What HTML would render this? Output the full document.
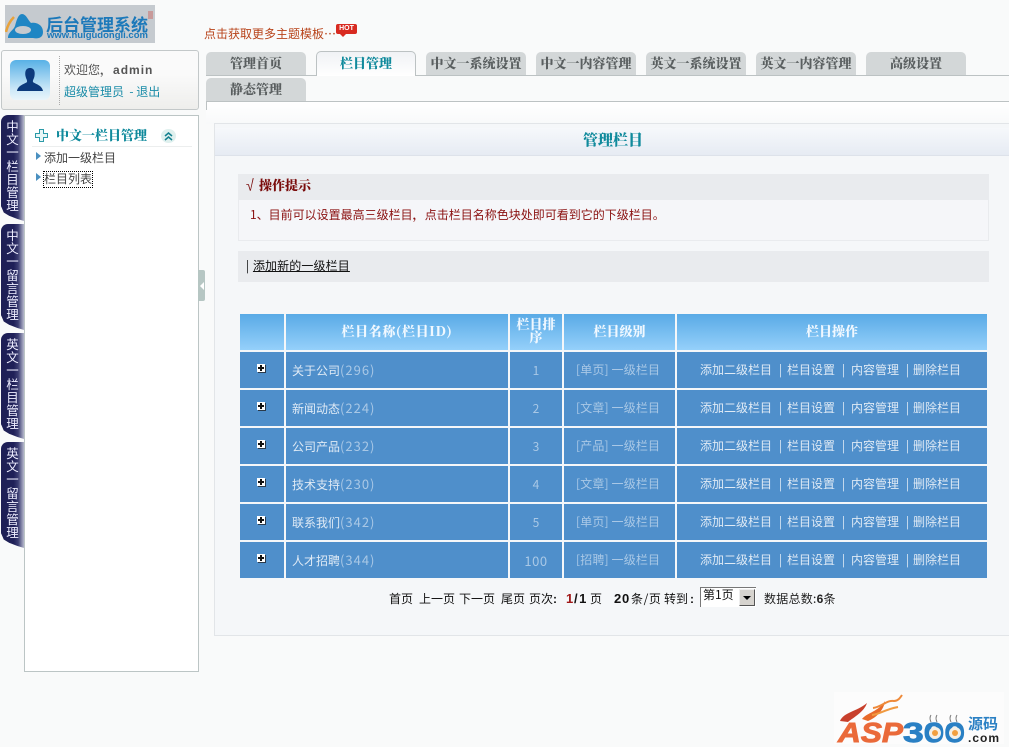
<!DOCTYPE html>
<html lang="zh"><head><meta charset="utf-8"><title>管理栏目</title>
<style>
*{box-sizing:border-box}
html,body{margin:0;padding:0;width:1009px;height:747px;overflow:hidden;background:#f9fafa}
body{position:relative;font:12px/14px "WenQuanYi Zen Hei","Noto Sans CJK SC",sans-serif;color:#333}
.a{position:absolute;white-space:nowrap}
.b{font-family:"Liberation Sans","Noto Serif CJK SC",serif;font-weight:700}
.s{font-family:"Noto Serif CJK SC",serif;font-weight:900}
.tab{position:absolute;width:100px;height:23px;background:#d3d7d8;border-radius:5px 5px 0 0;text-align:center;line-height:22px;font-family:"Noto Serif CJK SC",serif;font-weight:900;font-size:13px;color:#5a5f60}
.side{position:absolute;left:1px;width:23px;height:106px;background:linear-gradient(90deg,#1e1f55 0,#1f2058 55%,#3c3e72 75%,#b7b9cd 100%);border-radius:7px 0 0 0;color:#eef;text-align:center;font-size:12.5px;line-height:13.2px;padding-top:4px;padding-right:0;clip-path:polygon(0 0,100% 0,100% 100%,70% 98%,35% 95%,12% 92%,0 86%)}
.c{position:absolute;background:#4f8fcb;height:36px;color:#dfeaf5;line-height:35px}
.h{position:absolute;top:314px;height:36px;background:linear-gradient(#59aae6,#95d0fa);color:#f0f8ff;text-align:center;font-family:"Noto Serif CJK SC",serif;font-weight:900;font-size:13px;line-height:34px}
.dim{color:#a9c8e6}
.num{font-size:13px;letter-spacing:1px}
.lv{padding-left:12px;letter-spacing:.15px}
.rk{text-align:center;line-height:37px}
.op{padding-left:23px}
.op i{display:inline-block;font-style:normal;padding-left:7px}
.q{width:15px}.r{width:16px}.t{width:14px}
.pm{position:absolute;left:257px;width:8px;height:8px;background:#fff;box-shadow:1px 1px 0 #2a3a4a}
.pm:before{content:"";position:absolute;left:1px;top:3px;width:6px;height:2px;background:#111}
.pm:after{content:"";position:absolute;left:3px;top:1px;width:2px;height:6px;background:#111}
</style></head><body>

<!-- logo -->
<div class="a" style="left:5px;top:5px;width:150px;height:38px;background:#c5cacf"></div>
<svg class="a" style="left:5px;top:12px" width="42" height="30" viewBox="0 0 42 30">
<path d="M9 5Q3 11 1 20" stroke="#e8a23a" stroke-width="2.500" fill="none"/>
<path d="M3 26C3 20 8 19 10 14C12 6 14 2 17 2C21 2 23 8 26 11C30 10 38 12 38 20C38 26 33 27 28 26L10 26Z" fill="#1f86c4"/>
<ellipse cx="18" cy="18" rx="8" ry="4" fill="#c5cacf"/>
</svg>
<div class="a" style="left:46px;top:12px;font:700 17px/24px 'Noto Sans CJK SC',sans-serif;color:#1c79ba">后台管理系统</div>
<div class="a" style="left:47px;top:30px;font:700 9.500px/11px 'Liberation Sans',sans-serif;color:#1c79ba">www.huigudongli.com</div>
<div class="a" style="left:148px;top:11px;width:5px;height:8px;background:#c89a9a"></div>

<div class="a" style="left:204px;top:27px;color:#b8431a">点击获取更多主题模板…</div>
<div class="a" style="left:336px;top:24px;width:21px;height:10px;background:#d82a20;border-radius:2px;color:#fff;font:700 7px/10px 'Liberation Sans',sans-serif;text-align:center">HOT</div>
<div class="a" style="left:340px;top:34px;border-top:3px solid #d82a20;border-left:3px solid transparent;border-right:3px solid transparent"></div>

<!-- user -->
<div class="a" style="left:1px;top:50px;width:198px;height:60px;border:1px solid #c3c8c9;border-radius:3px;background:linear-gradient(#fafafa 40%,#eeeeec)"></div>
<div class="a" style="left:59px;top:56px;height:49px;border-left:1px dotted #aaa"></div>
<div class="a" style="left:10px;top:60px;width:40px;height:40px;border-radius:6px;background:linear-gradient(#58b1e6,#cfe9f8 75%,#e9f5fb)"></div>
<svg class="a" style="left:16px;top:67px" width="28" height="25" viewBox="0 0 28 25"><path d="M14 1C9 1 9 6 9.500 9C10 12 11.500 13 11 15C9 17 2 18 1 24L27 24C26 18 19 17 17 15C16.500 13 18 12 18.500 9C19 6 19 1 14 1Z" fill="#0c3a7c"/></svg>
<div class="a" style="left:64px;top:63px;color:#555">欢迎您<span class="b" style="font-size:12px;letter-spacing:1px">，admin</span></div>
<div class="a" style="left:64px;top:85px;color:#1a8ca8">超级管理员 &nbsp;- 退出</div>

<!-- side tabs -->
<div class="side" style="top:115px">中<br>文<br>一<br>栏<br>目<br>管<br>理</div>
<div class="side" style="top:224px">中<br>文<br>一<br>留<br>言<br>管<br>理</div>
<div class="side" style="top:333px">英<br>文<br>一<br>栏<br>目<br>管<br>理</div>
<div class="side" style="top:442px">英<br>文<br>一<br>留<br>言<br>管<br>理</div>

<!-- menu -->
<div class="a" style="left:24px;top:115px;width:175px;height:557px;background:#fff;border:1px solid #bcc5c5"></div>
<svg class="a" style="left:35px;top:129px" width="13" height="13" viewBox="0 0 13 13"><path d="M4.500 .5H8.500V4.500H12.500V8.500H8.500V12.500H4.500V8.500H.5V4.500H4.500Z" fill="#e8f6f6" stroke="#2b9aa8"/></svg>
<div class="a s" style="left:56px;top:128px;font-size:13px;color:#108a9c">中文一栏目管理</div>
<div class="a" style="left:161px;top:129px;width:15px;height:14px;border-radius:50%;background:#dff0ee;padding-top:1px"><svg width="9" height="10" viewBox="0 0 9 10" style="display:block;margin:1px auto"><path d="M1 5L4.500 2L8 5M1 9L4.500 6L8 9" fill="none" stroke="#137f8e" stroke-width="1.500"/></svg></div>
<div class="a" style="left:32px;top:146px;width:160px;border-top:1px solid #eceeee"></div>
<div class="a" style="left:36px;top:152px;border-left:5px solid #4a90c0;border-top:4px solid transparent;border-bottom:4px solid transparent"></div>
<div class="a" style="left:44px;top:151px;color:#444">添加一级栏目</div>
<div class="a" style="left:36px;top:173px;border-left:5px solid #4a90c0;border-top:4px solid transparent;border-bottom:4px solid transparent"></div>
<div class="a" style="left:44px;top:172px;color:#444;outline:1px dotted #000;height:15px">栏目列表</div>

<!-- handle -->
<div class="a" style="left:198px;top:270px;width:7px;height:31px;background:#b6c6c3;border-radius:0 2px 2px 0"></div>
<div class="a" style="left:200px;top:282px;border-right:4px solid #fff;border-top:4px solid transparent;border-bottom:4px solid transparent"></div>

<!-- tabs -->
<div class="a" style="left:206px;top:75px;width:803px;height:1px;background:#bcc2c3"></div>
<div class="tab" style="left:206px;top:52px">管理首页</div>
<div class="tab" style="left:316px;top:51px;height:25px;background:linear-gradient(#f0f2f5,#fff);border:1px solid #bcc2c3;border-bottom:0;color:#108a9c">栏目管理</div>
<div class="tab" style="left:426px;top:52px">中文一系统设置</div>
<div class="tab" style="left:536px;top:52px">中文一内容管理</div>
<div class="tab" style="left:646px;top:52px">英文一系统设置</div>
<div class="tab" style="left:756px;top:52px">英文一内容管理</div>
<div class="tab" style="left:866px;top:52px">高级设置</div>
<div class="tab" style="left:206px;top:78px">静态管理</div>

<div class="a" style="left:206px;top:101px;width:803px;height:1px;background:#bcc2c3"></div>
<div class="a" style="left:206px;top:102px;width:803px;height:22px;background:linear-gradient(#fff,#f8f9fa)"></div>
<div class="a" style="left:206px;top:102px;width:1px;height:8px;background:#bcc2c3"></div>

<!-- panel -->
<div class="a" style="left:214px;top:123px;width:795px;height:513px;background:#f5f7f9;border:1px solid #e2e5e8;border-right:0"></div>
<div class="a" style="left:215px;top:128px;width:794px;height:28px;background:linear-gradient(#f6f8fb,#e6ebf3);border-bottom:1px solid #dde2ea"></div>
<div class="a s" style="left:583px;top:130px;font-size:15px;line-height:20px;color:#108a9c">管理栏目</div>

<div class="a" style="left:238px;top:174px;width:751px;height:67px;background:#f5f6f9;border:1px solid #e9ebee"></div>
<div class="a" style="left:238px;top:174px;width:751px;height:26px;background:#e9ebee"></div>
<div class="a s" style="left:244px;top:178px;color:#7a0c0c">√</div>
<div class="a s" style="left:259px;top:178px;font-size:13px;color:#7a0c0c">操作提示</div>
<div class="a" style="left:250px;top:208px;color:#8a1010">1、目前可以设置最高三级栏目<span class="b">，</span>点击栏目名称色块处即可看到它的下级栏目。</div>

<div class="a" style="left:238px;top:251px;width:751px;height:31px;background:#e9ebee"></div>
<div class="a" style="left:246px;top:259px;color:#111">| <span style="text-decoration:underline;letter-spacing:.12px;margin-left:1px">添加新的一级栏目</span></div>

<!-- table -->
<div class="h" style="left:240px;width:44px"></div>
<div class="h" style="left:286px;width:222px;letter-spacing:.6px">栏目名称(栏目ID)</div>
<div class="h" style="left:510px;width:52px;line-height:13px;padding:3px 6px 0;white-space:normal">栏目排序</div>
<div class="h" style="left:564px;width:111px">栏目级别</div>
<div class="h" style="left:677px;width:310px">栏目操作</div>

<div class="c" style="left:240px;top:352px;width:44px"></div><div class="pm" style="top:364px"></div>
<div class="c" style="left:286px;top:352px;width:222px;padding-left:6px">关于公司<span class="dim num">(296)</span></div>
<div class="c dim rk" style="left:510px;top:352px;width:52px">1</div>
<div class="c dim lv" style="left:564px;top:352px;width:111px">[单页] 一级栏目</div>
<div class="c op" style="left:677px;top:352px;width:310px">添加二级栏目<i class="q">|</i>栏目设置<i class="r">|</i>内容管理<i class="t">|</i>删除栏目</div>

<div class="c" style="left:240px;top:390px;width:44px"></div><div class="pm" style="top:402px"></div>
<div class="c" style="left:286px;top:390px;width:222px;padding-left:6px">新闻动态<span class="dim num">(224)</span></div>
<div class="c dim rk" style="left:510px;top:390px;width:52px">2</div>
<div class="c dim lv" style="left:564px;top:390px;width:111px">[文章] 一级栏目</div>
<div class="c op" style="left:677px;top:390px;width:310px">添加二级栏目<i class="q">|</i>栏目设置<i class="r">|</i>内容管理<i class="t">|</i>删除栏目</div>

<div class="c" style="left:240px;top:428px;width:44px"></div><div class="pm" style="top:440px"></div>
<div class="c" style="left:286px;top:428px;width:222px;padding-left:6px">公司产品<span class="dim num">(232)</span></div>
<div class="c dim rk" style="left:510px;top:428px;width:52px">3</div>
<div class="c dim lv" style="left:564px;top:428px;width:111px">[产品] 一级栏目</div>
<div class="c op" style="left:677px;top:428px;width:310px">添加二级栏目<i class="q">|</i>栏目设置<i class="r">|</i>内容管理<i class="t">|</i>删除栏目</div>

<div class="c" style="left:240px;top:466px;width:44px"></div><div class="pm" style="top:478px"></div>
<div class="c" style="left:286px;top:466px;width:222px;padding-left:6px">技术支持<span class="dim num">(230)</span></div>
<div class="c dim rk" style="left:510px;top:466px;width:52px">4</div>
<div class="c dim lv" style="left:564px;top:466px;width:111px">[文章] 一级栏目</div>
<div class="c op" style="left:677px;top:466px;width:310px">添加二级栏目<i class="q">|</i>栏目设置<i class="r">|</i>内容管理<i class="t">|</i>删除栏目</div>

<div class="c" style="left:240px;top:504px;width:44px"></div><div class="pm" style="top:516px"></div>
<div class="c" style="left:286px;top:504px;width:222px;padding-left:6px">联系我们<span class="dim num">(342)</span></div>
<div class="c dim rk" style="left:510px;top:504px;width:52px">5</div>
<div class="c dim lv" style="left:564px;top:504px;width:111px">[单页] 一级栏目</div>
<div class="c op" style="left:677px;top:504px;width:310px">添加二级栏目<i class="q">|</i>栏目设置<i class="r">|</i>内容管理<i class="t">|</i>删除栏目</div>

<div class="c" style="left:240px;top:542px;width:44px"></div><div class="pm" style="top:554px"></div>
<div class="c" style="left:286px;top:542px;width:222px;padding-left:6px">人才招聘<span class="dim num">(344)</span></div>
<div class="c dim rk" style="left:510px;top:542px;width:52px;font-size:13px;letter-spacing:.5px">100</div>
<div class="c dim lv" style="left:564px;top:542px;width:111px">[招聘] 一级栏目</div>
<div class="c op" style="left:677px;top:542px;width:310px">添加二级栏目<i class="q">|</i>栏目设置<i class="r">|</i>内容管理<i class="t">|</i>删除栏目</div>

<!-- pager -->
<div class="a" style="left:389px;top:592px;color:#111">首页</div>
<div class="a" style="left:419px;top:592px;color:#111">上一页</div>
<div class="a" style="left:459px;top:592px;color:#111">下一页</div>
<div class="a" style="left:501px;top:592px;color:#111">尾页</div>
<div class="a" style="left:529px;top:592px;color:#111">页次<span class="b">:</span></div>
<div class="a b" style="left:566px;top:592px;font-size:13px;color:#a01818">1</div>
<div class="a b" style="left:574px;top:592px;font-size:13px;letter-spacing:1.5px;color:#111">/1</div>
<div class="a" style="left:590px;top:592px;color:#111">页</div>
<div class="a b" style="left:614px;top:592px;font-size:13px;letter-spacing:.8px;color:#111">20</div>
<div class="a" style="left:631px;top:592px;letter-spacing:.6px;color:#111">条/页</div>
<div class="a" style="left:664px;top:592px;color:#111">转到<span class="b" style="margin-left:2px">:</span></div>
<div class="a" style="left:700px;top:587px;width:56px;height:20px;background:#fff;border-left:1px solid #777;border-top:1px solid #777;padding-left:2px;line-height:13px;color:#111">第1页</div>
<div class="a" style="left:739px;top:589px;width:16px;height:17px;background:#d6d3ce;border:1px solid;border-color:#eee #555 #555 #eee"></div>
<div class="a" style="left:743px;top:596px;border-top:4px solid #000;border-left:4px solid transparent;border-right:4px solid transparent"></div>
<div class="a" style="left:764px;top:592px;letter-spacing:.25px;color:#222">数据总数:<span class="b">6</span>条</div>

<!-- asp300 logo -->
<div class="a" style="left:834px;top:692px;width:170px;height:52px;background:#fcfcfc"></div>
<svg class="a" style="left:834px;top:692px" width="170" height="52" viewBox="0 0 170 52">
<path d="M6 29C10 20 22 20 33 11C30 20 20 25 14 30Z" fill="#c8402c"/>
<path d="M28 27C34 20 44 20 51 9C50 18 42 26 34 29Z" fill="#e86a2a"/>
<path d="M39 16C48 15 52 8 60 9C64 9 66 6 68 3" fill="none" stroke="#ee8a3a" stroke-width="2"/>
<path d="M38 23C46 22 52 17 64 15" fill="none" stroke="#f09a40" stroke-width="2"/>
<text x="4" y="50" font-family="Liberation Sans" font-weight="700" font-style="italic" font-size="28" fill="#ea6a3a" stroke="#ea6a3a" stroke-width=".9" textLength="65" lengthAdjust="spacingAndGlyphs">ASP</text>
<text x="69" y="50" font-family="Liberation Sans" font-weight="700" font-size="28" fill="#2a80c4" stroke="#2a80c4" stroke-width=".9" textLength="62" lengthAdjust="spacingAndGlyphs">300</text>
<circle cx="101" cy="41" r="6" fill="#f5f0e6"/><circle cx="101" cy="41" r="3" fill="#f2a040"/>
<circle cx="121" cy="41" r="6" fill="#f5f0e6"/><circle cx="121" cy="41" r="3" fill="#f2a040"/>
<path d="M97 30q-2-4 0-7M103 30q-2-4 0-7M117 30q-2-4 0-7M123 30q-2-4 0-7" stroke="#777" fill="none"/>
<text x="134" y="37" font-family="Noto Sans CJK SC" font-weight="700" font-size="15" fill="#2a80c4" textLength="30">源码</text>
<text x="134" y="50" font-family="Liberation Sans" font-weight="700" font-size="12" fill="#222" textLength="31">.com</text>
</svg>
</body></html>
